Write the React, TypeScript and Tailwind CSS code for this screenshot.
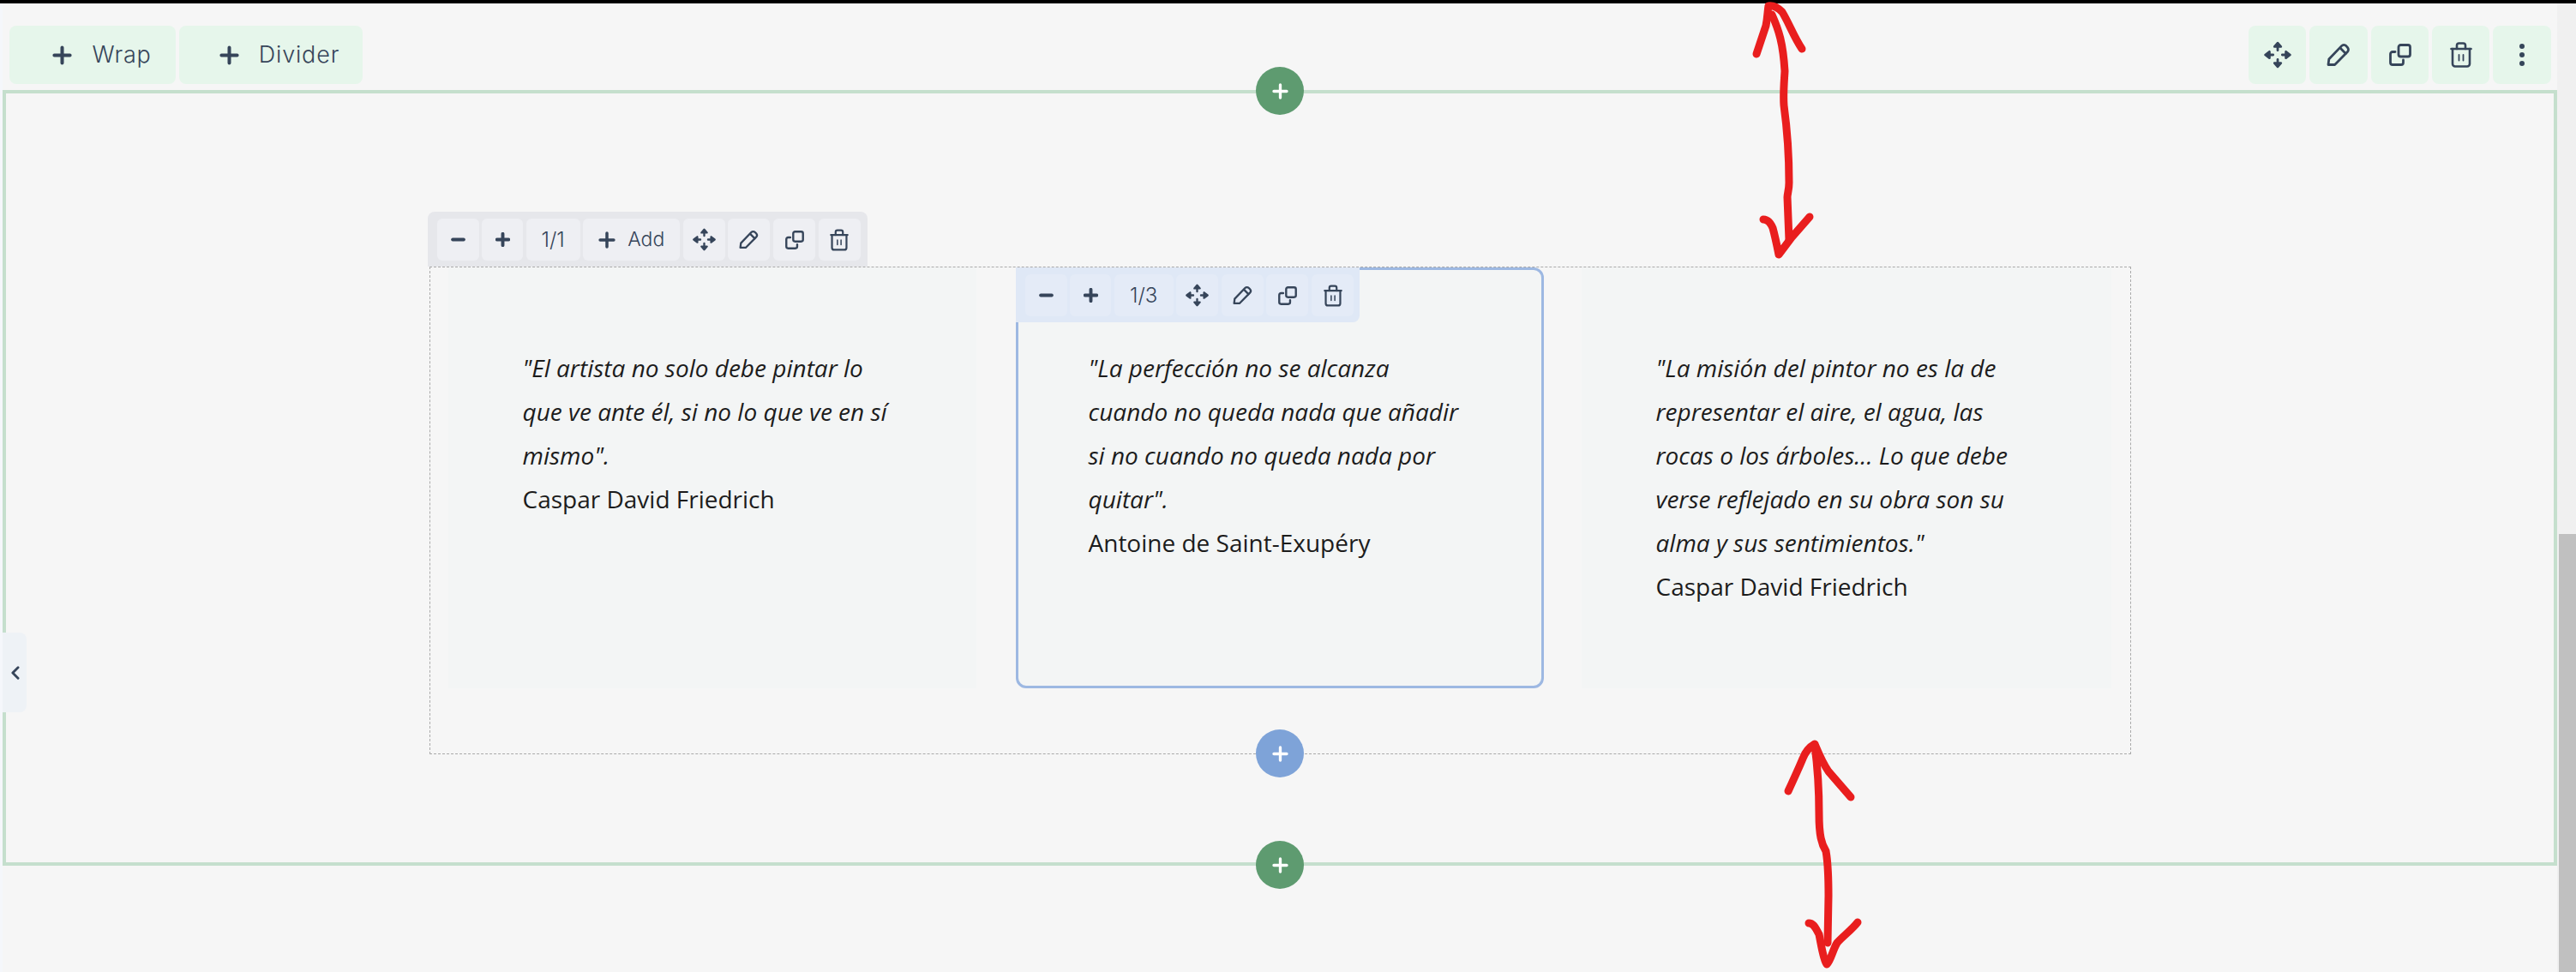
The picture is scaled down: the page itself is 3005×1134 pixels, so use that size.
import { ReactNode } from "react";

const MoveIcon = ({ className }: { className: string }) => (
  <svg viewBox="0 0 30 30" className={className} fill="none" stroke="currentColor" strokeWidth="2.6" strokeLinecap="round" strokeLinejoin="round">
    <path d="M15 2 18.500 6 11.500 6Z" fill="currentColor" />
    <path d="M15 28 18.500 24 11.500 24Z" fill="currentColor" />
    <path d="M1.500 15 6 11.500 6 18.500Z" fill="currentColor" />
    <path d="M28.500 15 24 11.500 24 18.500Z" fill="currentColor" />
    <path d="M15 6v4M15 20v4M6 15h4M20 15h4" />
  </svg>
);

const PencilIcon = ({ className }: { className: string }) => (
  <svg viewBox="0 0 28 28" className={className} fill="none" stroke="currentColor" strokeWidth="2.800" strokeLinecap="round" strokeLinejoin="round">
    <path d="M2 25.500 2.800 19 17.500 3.600a3.800 3.800 0 0 1 5.400 0l1.500 1.600a3.800 3.800 0 0 1 0 5.300L9.600 25.500Z" />
    <path d="M16 6l6.400 6.400" />
  </svg>
);

const CopyIcon = ({ className }: { className: string }) => (
  <svg viewBox="0 0 26 26" className={className} fill="none" stroke="currentColor" strokeWidth="2.800" strokeLinecap="round" strokeLinejoin="round">
    <rect x="11" y="1.500" width="13.500" height="13.500" rx="2.500" />
    <path d="M7 9.500H4a2.500 2.500 0 0 0-2.500 2.500v10A2.500 2.500 0 0 0 4 24.500h10a2.500 2.500 0 0 0 2.500-2.500V19" />
  </svg>
);

const TrashIcon = ({ className }: { className: string }) => (
  <svg viewBox="0 0 26 30" className={className} fill="none" stroke="currentColor" strokeWidth="2.600" strokeLinecap="round" strokeLinejoin="round">
    <path d="M1.500 8h23" />
    <path d="M8 8V4a2.500 2.500 0 0 1 2.500-2.500h5A2.500 2.500 0 0 1 18 4v4" />
    <path d="M3 8v17.500A3 3 0 0 0 6 28.500h14a3 3 0 0 0 3-3V8" />
    <path d="M10.500 15v6.500M15.500 15v6.500" strokeWidth="1.800" />
  </svg>
);

const PlusIcon = ({ className, weight = 4.200 }: { className: string; weight?: number }) => (
  <svg viewBox="0 0 24 24" className={className} fill="none" stroke="currentColor" strokeWidth={weight} strokeLinecap="round">
    <path d="M12 2.500v19M2.500 12h19" />
  </svg>
);

const MinusIcon = ({ className }: { className: string }) => (
  <svg viewBox="0 0 24 24" className={className} fill="none" stroke="currentColor" strokeWidth="5.500" strokeLinecap="round">
    <path d="M3 12h18" />
  </svg>
);

const TopButton = ({ width, children }: { width: string; children: ReactNode }) => (
  <button className={`flex h-[68px] items-center justify-center rounded-lg bg-[#e6f6eb] text-[#36455a] ${width}`}>
    {children}
  </button>
);

const SmallButton = ({ width, tone, children }: { width: string; tone: string; children: ReactNode }) => (
  <button className={`flex h-[49px] items-center justify-center rounded-md text-[#36455a] ${tone} ${width}`}>
    {children}
  </button>
);

const CircleAdd = ({ tone, place }: { tone: string; place: string }) => (
  <button className={`absolute left-1/2 flex size-14 -translate-x-1/2 items-center justify-center rounded-full text-white ${tone} ${place}`}>
    <PlusIcon className="size-[19px]" />
  </button>
);

const Quote = ({ pad, text, author }: { pad: string; text: string; author: string }) => (
  <p className={`w-[436px] text-[28px] leading-[51px] text-[#1c1c1c] ${pad}`}>
    <em>{text}</em>
    <br />
    {author}
  </p>
);

const Toolbar = ({ tone, wrap, label, add }: { tone: string; wrap: string; label: string; add?: boolean }) => (
  <div className={`absolute flex items-center gap-[3.600px] ${wrap}`}>
    <SmallButton width="w-[49px]" tone={tone}><MinusIcon className="size-[17px]" /></SmallButton>
    <SmallButton width="w-[48px]" tone={tone}><PlusIcon className="size-[17px]" weight={5.500} /></SmallButton>
    <SmallButton width={add ? "w-[63px]" : "w-[69px]"} tone={tone}>
      <span className="text-[24px] font-light">{label}</span>
    </SmallButton>
    {add && (
      <SmallButton width="w-[113px]" tone={tone}>
        <PlusIcon className="mr-[14px] size-[20px]" />
        <span className="text-[23px] font-light">Add</span>
      </SmallButton>
    )}
    <SmallButton width="w-[49px]" tone={tone}><MoveIcon className="size-[27px]" /></SmallButton>
    <SmallButton width="w-[49px]" tone={tone}><PencilIcon className="size-[23px]" /></SmallButton>
    <SmallButton width="w-[49px]" tone={tone}><CopyIcon className="size-[22px]" /></SmallButton>
    <SmallButton width="w-[49px]" tone={tone}><TrashIcon className="h-[26px] w-[22px]" /></SmallButton>
  </div>
);

// the red hand drawn arrows on top of the screenshot
const Annotations = () => (
  <svg viewBox="0 0 3005 1134" className="pointer-events-none absolute inset-0 size-full" fill="none" stroke="#e91e1e" strokeWidth="9" strokeLinecap="round" strokeLinejoin="round">
    <path d="M2067 17C2075 35 2080 50 2082 83C2081 100 2080 110 2081 123C2084 145 2087 173 2087 213C2087 222 2085 226 2085 230L2087 280" />
    <path d="M2049 63L2060 30C2062 20 2062 12 2063 7C2070 6 2075 10 2079 14C2087 27 2092 42 2102 57" />
    <path d="M2057 256C2062 256 2065 259 2068 266C2071 277 2073 287 2075 297L2090 277L2111 253" />
    <path d="M2117 870C2121 900 2122 925 2122 950C2122 975 2125 985 2130 993C2133 1010 2133 1027 2133 1045L2132 1100" />
    <path d="M2086 923C2092 910 2098 897 2103 885C2106 877 2110 872 2117 868C2122 880 2126 890 2133 900L2159 930" />
    <path d="M2110 1077C2116 1077 2118 1083 2122 1090C2125 1105 2127 1120 2131 1125C2136 1120 2138 1108 2143 1100C2150 1092 2160 1085 2167 1076" />
  </svg>
);

const App = () => {
  return (
    <div className="relative flex h-[1134px] w-[3005px] flex-col overflow-hidden bg-[#f6f6f6] font-['Open_Sans',sans-serif]">
      <div className="h-1 shrink-0 bg-black" />
      <div className="flex flex-1">
        <main className="relative flex-1 border-l-[3px] border-[#f5f7fb] font-['Inter',sans-serif]">
          <div className="flex justify-between pr-[7px] pl-[8px] pt-[26px]">
            <div className="flex gap-[4px]">
              <TopButton width="w-[194px] pl-[22px]">
                <PlusIcon className="mr-[23px] size-[23px]" />
                <span className="text-[27px] font-light tracking-[0.03em]">Wrap</span>
              </TopButton>
              <TopButton width="w-[214px] pl-[20px]">
                <PlusIcon className="mr-[23px] size-[23px]" />
                <span className="text-[27px] font-light tracking-[0.03em]">Divider</span>
              </TopButton>
            </div>
            <div className="flex gap-[4px]">
              <TopButton width="w-[67px]"><MoveIcon className="size-[32px]" /></TopButton>
              <TopButton width="w-[68px]"><PencilIcon className="size-[28px]" /></TopButton>
              <TopButton width="w-[67px]"><CopyIcon className="size-[26px]" /></TopButton>
              <TopButton width="w-[67px]"><TrashIcon className="h-[30px] w-[26px]" /></TopButton>
              <TopButton width="w-[68px]">
                <div className="flex flex-col gap-[3.500px]">
                  <span className="size-[6.500px] rounded-full bg-[#36455a]" />
                  <span className="size-[6.500px] rounded-full bg-[#36455a]" />
                  <span className="size-[6.500px] rounded-full bg-[#36455a]" />
                </div>
              </TopButton>
            </div>
          </div>

          <section className="relative mt-[7px] flex h-[905px] justify-center border-4 border-[#c5dfcd] pt-[202px]">
            <CircleAdd tone="bg-[#5e9b70]" place="-top-[31px]" />
            <div className="relative flex h-[569px] w-[1985px] gap-[46px] border border-dashed border-[#aaaaaa] pl-[21px] font-['Open_Sans',sans-serif]">
              <div className="absolute -left-[3px] -top-[65px] h-[64px] w-[513px] rounded-t-lg bg-[#e6e7eb]" />
              <Toolbar tone="bg-[#eeeff3]" wrap="left-[8px] -top-[57px] font-['Inter',sans-serif]" label="1/1" add />

              <article className="h-[491px] w-[616px] bg-[#f3f5f5]">
                <Quote
                  pad="ml-[87px] pt-[92px]"
                  text={'"El artista no solo debe pintar lo que ve ante él, si no lo que ve en sí mismo".'}
                  author="Caspar David Friedrich"
                />
              </article>

              <article className="relative -mr-[2px] h-[491px] w-[616px] rounded-xl border-[3px] border-[#9db8e2] bg-[#f3f5f5]">
                <div className="absolute -left-[3px] -top-[3px] h-[64px] w-[401px] rounded-br-lg bg-[#dfe8f6]" />
                <Toolbar tone="bg-[#e4ebf7]" wrap="left-[8px] top-[5px] font-['Inter',sans-serif]" label="1/3" />
                <Quote
                  pad="ml-[82px] pt-[89px]"
                  text={'"La perfección no se alcanza cuando no queda nada que añadir si no cuando no queda nada por quitar".'}
                  author="Antoine de Saint-Exupéry"
                />
              </article>

              <article className="h-[491px] w-[618px] bg-[#f3f5f5]">
                <Quote
                  pad="ml-[87px] pt-[92px]"
                  text={'"La misión del pintor no es la de representar el aire, el agua, las rocas o los árboles... Lo que debe verse reflejado en su obra son su alma y sus sentimientos."'}
                  author="Caspar David Friedrich"
                />
              </article>

              <CircleAdd tone="bg-[#7ea3d8]" place="-bottom-[28px]" />
            </div>
            <CircleAdd tone="bg-[#5e9b70]" place="-bottom-[31px]" />
          </section>

          <button className="absolute left-0 top-[734px] flex h-[93px] w-[28px] items-center justify-center rounded-r-lg bg-[#eef2f6] text-[#36455a]">
            <svg viewBox="0 0 12 18" className="h-[16px] w-[11px]" fill="none" stroke="currentColor" strokeWidth="3.200" strokeLinecap="round" strokeLinejoin="round">
              <path d="M10 2 3 9l7 7" />
            </svg>
          </button>
        </main>

        <aside className="w-[22px] shrink-0 bg-[#f0f0f0] pl-[2px] pt-[619px]">
          <div className="h-[511px] bg-[#c0c0c0]" />
        </aside>
      </div>
      <Annotations />
    </div>
  );
};

export default App;
